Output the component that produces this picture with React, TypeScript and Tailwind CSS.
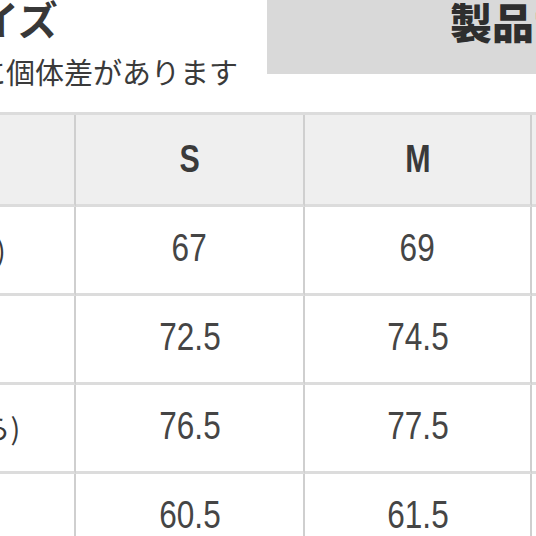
import React from "react";

const rows: { label: string; s: string; m: string; l: string }[] = [
  { label: "身幅(脇下)", s: "67", m: "69", l: "71" },
  { label: "着丈", s: "72.5", m: "74.5", l: "76.5" },
  { label: "袖丈(肩から)", s: "76.5", m: "77.5", l: "78.5" },
  { label: "ウエスト", s: "60.5", m: "61.5", l: "62.5" },
];

const cellBase =
  "border-r-2 border-b-[3px] border-r-[#cfcfcf] border-b-[#dcdcdc] flex items-center justify-center";
const latin = "font-['Liberation_Sans_Narrow','Liberation_Sans',sans-serif]";
const jp = "font-['Noto_Sans_CJK_JP',sans-serif]";

export default function App() {
  return (
    <div className="w-[536px] h-[536px] overflow-hidden bg-white text-[#333333]">
      <div className="flex h-[112px]">
        <div className={`w-[267px] shrink-0 ${jp}`}>
          <div className="ml-[-61px] mt-[-2px] text-[40px] leading-none font-bold whitespace-nowrap text-[#383838]">
            サイズ
          </div>
          <div className="ml-[-168px] mt-[19px] text-[29px] leading-none whitespace-nowrap text-[#3a3a3a]">
            ※商品ごとに個体差があります
          </div>
        </div>
        <div
          className={`flex-1 h-[74px] bg-[#d9d9d9] pl-[183px] ${jp} text-[42px] leading-none font-black whitespace-nowrap overflow-hidden text-[#2e2e2e]`}
        >
          製品サイズ
        </div>
      </div>
      <div className="ml-[-198px] border-t-[3px] border-[#dcdcdc] grid grid-cols-[274px_229px_227px_200px]">
        <div className={`h-[92px] bg-[#efefef] ${cellBase} ${jp} text-[29px]`}>
          サイズ
        </div>
        {["S", "M", "L"].map((h) => (
          <div
            key={h}
            className={`h-[92px] bg-[#efefef] ${cellBase} ${latin} font-bold text-[38px] text-[#3a3a3a]`}
          >
            <span className="inline-block scale-x-[0.8]">{h}</span>
          </div>
        ))}
        {rows.map((r) => (
          <React.Fragment key={r.label}>
            <div
              className={`h-[89px] bg-white ${cellBase} ${jp} text-[29px] text-[#3a3a3a] whitespace-nowrap`}
            >
              {r.label}
            </div>
            {[r.s, r.m, r.l].map((v, i) => (
              <div
                key={i}
                className={`h-[89px] bg-white ${cellBase} pb-[4px] ${latin} text-[38px] text-[#454545]`}
              >
                <span className="inline-block scale-x-[0.83]">{v}</span>
              </div>
            ))}
          </React.Fragment>
        ))}
      </div>
    </div>
  );
}
